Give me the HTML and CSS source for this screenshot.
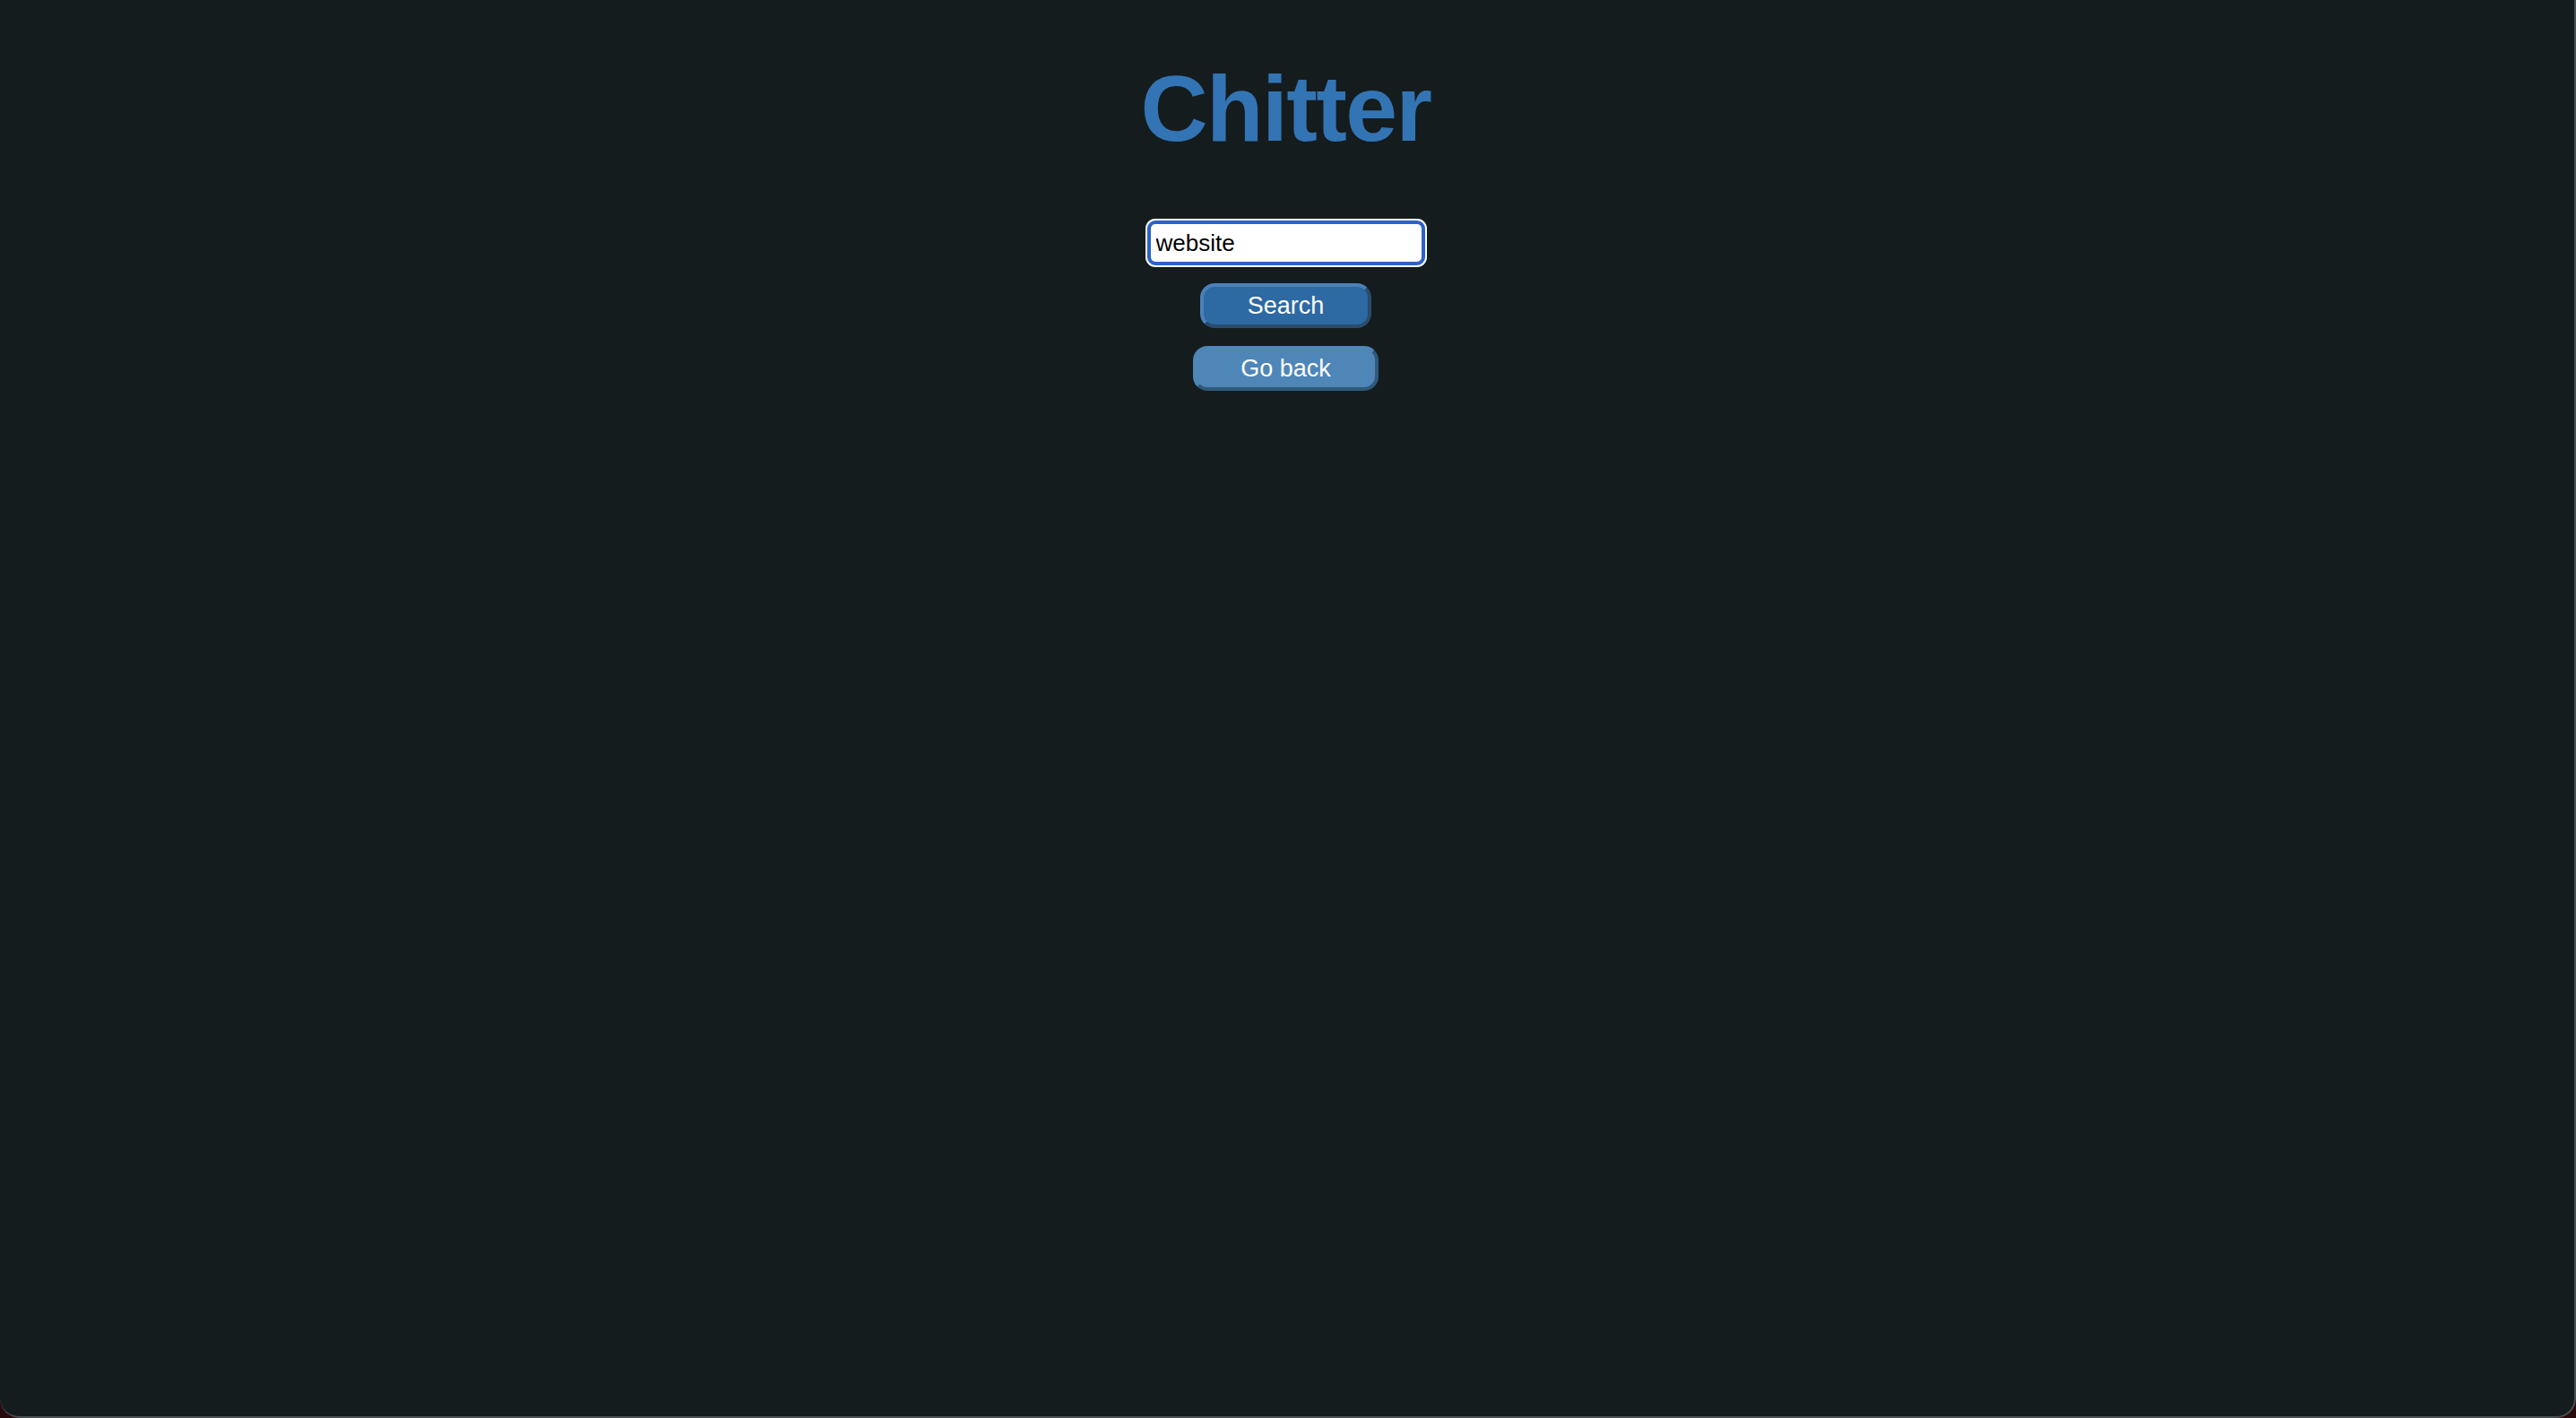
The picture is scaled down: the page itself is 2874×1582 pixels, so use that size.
FILE: index.html
```html
<!DOCTYPE html>
<html lang="en">
<head>
<meta charset="utf-8">
<title>Chitter</title>
<link rel="stylesheet" href="styles.css">
</head>
<body>
<div class="window">
  <main class="page">
    <h1 class="title">Chitter</h1>
    <form class="search-form">
      <input class="search-input" type="text" value="website" autofocus>
      <button class="btn btn-search" type="button">Search</button>
      <button class="btn btn-back" type="button">Go back</button>
    </form>
  </main>
</div>
</body>
</html>
```

FILE: styles.css
```css
html {
  background: #2a0b0d;
}

body {
  margin: 0;
  font-family: "Liberation Sans", Arial, sans-serif;
}

.window {
  box-sizing: border-box;
  min-height: 100vh;
  background: #151c1e;
  border-right: 2px solid #4b5052;
  border-bottom: 2px solid #4b5052;
  border-radius: 0 0 22px 22px;
}

.page {
  display: flex;
  flex-direction: column;
  align-items: center;
  padding-top: 69px;
  padding-right: 3px;
}

.title {
  margin: 0;
  font-size: 104px;
  line-height: 104px;
  font-weight: 700;
  color: #3374b4;
  letter-spacing: -1.6px;
}

.search-form {
  display: flex;
  flex-direction: column;
  align-items: center;
  margin-top: 73px;
}

.search-input {
  box-sizing: border-box;
  width: 310px;
  height: 50px;
  padding: 0 6px;
  border: 4px solid #2d62c6;
  border-radius: 9px;
  box-shadow: 0 0 0 2px #ffffff;
  background: #ffffff;
  color: #000000;
  font-family: "Liberation Sans", Arial, sans-serif;
  font-size: 26px;
  outline: none;
}

.btn {
  margin-top: 20px;
  padding: 5px 49px;
  border-width: 4px;
  border-style: solid;
  border-radius: 16px;
  color: #ffffff;
  font-family: "Liberation Sans", Arial, sans-serif;
  font-size: 27px;
  line-height: 32px;
}

.btn-search {
  background: #2d69a2;
  border-color: #4a81b9 #2a4b6c #2a4b6c #4a81b9;
}

.btn-back {
  background: #4f86b8;
  border-color: #4f86b8 #30587b #30587b #4f86b8;
}
```
